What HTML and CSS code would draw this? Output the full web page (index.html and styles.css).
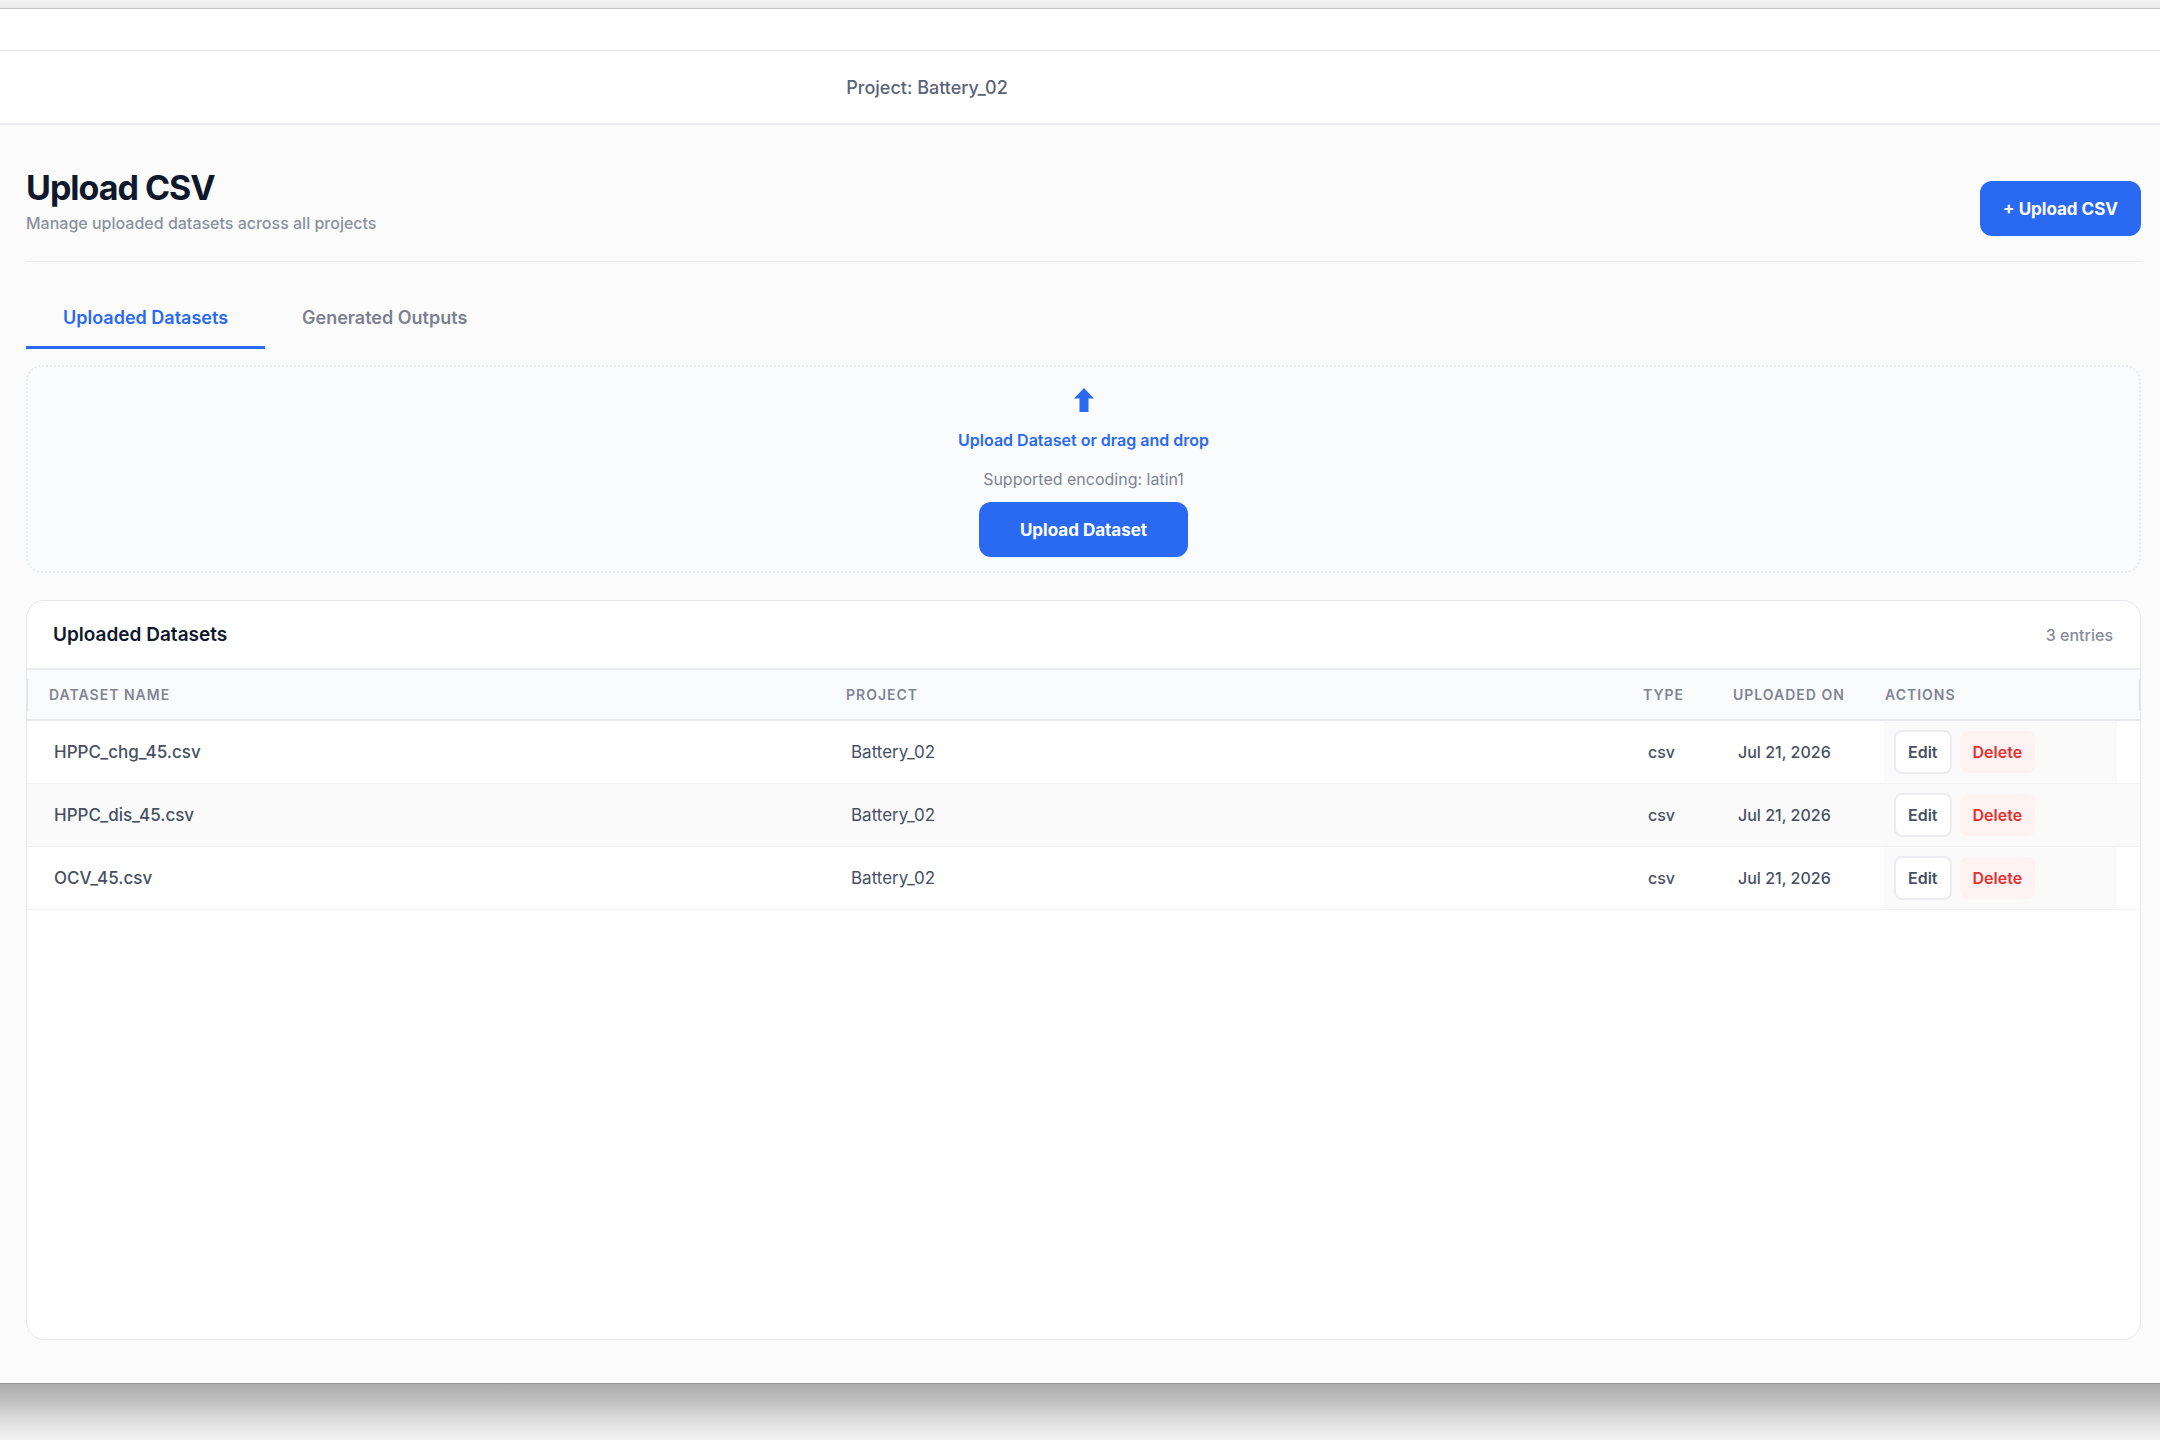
FILE: index.html
```html
<!DOCTYPE html>
<html lang="en">
<head>
<meta charset="utf-8">
<meta name="viewport" content="width=device-width, initial-scale=1">
<title>Upload CSV</title>
<link rel="stylesheet" href="styles.css">
</head>
<body>
<div class="window">
  <div class="titlebar"></div>
  <header class="project-bar">Project: Battery_02</header>
  <main class="page">
    <div class="page-head">
      <div>
        <h1 class="page-title">Upload CSV</h1>
        <p class="page-subtitle">Manage uploaded datasets across all projects</p>
      </div>
      <button class="btn-primary" type="button">+ Upload CSV</button>
    </div>
    <nav class="tabs">
      <a class="tab tab-active" href="#uploaded">Uploaded Datasets</a>
      <a class="tab" href="#outputs">Generated Outputs</a>
    </nav>
    <section class="dropzone">
      <svg class="drop-icon" viewBox="0 0 20 24" aria-hidden="true"><path d="M10 0L20 10.500H14.500V24H5.500V10.500H0Z"/></svg>
      <p class="drop-title">Upload Dataset or drag and drop</p>
      <p class="drop-note">Supported encoding: latin1</p>
      <button class="btn-primary btn-wide" type="button">Upload Dataset</button>
    </section>
    <section class="card" id="uploaded">
      <div class="card-head">
        <h2 class="card-title">Uploaded Datasets</h2>
        <span class="card-count">3 entries</span>
      </div>
      <table class="datasets">
        <colgroup><col><col><col class="col-type"><col class="col-date"><col class="col-actions"></colgroup>
        <thead>
          <tr><th>Dataset name</th><th>Project</th><th>Type</th><th><div class="clip">Uploaded on</div></th><th>Actions</th></tr>
        </thead>
        <tbody>
          <tr>
            <td class="name">HPPC_chg_45.csv</td><td>Battery_02</td><td class="meta">csv</td><td class="meta">Jul 21, 2026</td>
            <td class="actions-cell"><div class="actions"><button class="btn-edit" type="button">Edit</button><button class="btn-delete" type="button">Delete</button></div></td>
          </tr>
          <tr>
            <td class="name">HPPC_dis_45.csv</td><td>Battery_02</td><td class="meta">csv</td><td class="meta">Jul 21, 2026</td>
            <td class="actions-cell"><div class="actions"><button class="btn-edit" type="button">Edit</button><button class="btn-delete" type="button">Delete</button></div></td>
          </tr>
          <tr>
            <td class="name">OCV_45.csv</td><td>Battery_02</td><td class="meta">csv</td><td class="meta">Jul 21, 2026</td>
            <td class="actions-cell"><div class="actions"><button class="btn-edit" type="button">Edit</button><button class="btn-delete" type="button">Delete</button></div></td>
          </tr>
        </tbody>
      </table>
    </section>
  </main>
</div>
<div class="window-shadow"></div>
</body>
</html>
```
FILE: styles.css
```css
* { box-sizing: border-box; }

body {
  margin: 0;
  min-height: 100vh;
  padding-top: 8px;
  display: flex;
  flex-direction: column;
  background: linear-gradient(#f4f4f4, #e9e9e9 8px);
  font-family: Inter, "Liberation Sans", sans-serif;
  font-size: 16px;
  line-height: 24px;
  color: #475063;
}

h1, h2, p { margin: 0; }
button { font: inherit; cursor: pointer; }

.window {
  flex: 1;
  display: flex;
  flex-direction: column;
  background: #fbfbfb;
  border-top: 1px solid #c4c4c4;
  border-bottom: 1px solid #959595;
}

.titlebar {
  height: 42px;
  background: #fff;
  border-bottom: 1px solid #e6e7e9;
}

.project-bar {
  height: 74px;
  padding: 2px 306px 0 0;
  display: flex;
  align-items: center;
  justify-content: center;
  background: #fff;
  border-bottom: 2px solid #e8e9ec;
  font-size: 18px;
  font-weight: 500;
  color: #5b6477;
}

.page {
  flex: 1;
  display: flex;
  flex-direction: column;
  padding: 41px 19px 43px 26px;
}

.page-head {
  display: flex;
  align-items: flex-end;
  justify-content: space-between;
  padding-bottom: 25px;
  border-bottom: 1px solid #ececee;
}

.page-title {
  font-size: 34px;
  line-height: 44px;
  font-weight: 700;
  letter-spacing: -1px;
  color: #10182d;
}

.page-subtitle { line-height: 26px; font-weight: 500; color: #8b919d; }

.btn-primary {
  height: 55px;
  padding: 0 23px;
  border: 0;
  border-radius: 12px;
  background: #2a69f2;
  color: #fff;
  font-size: 17px;
  font-weight: 700;
}

.btn-wide { padding: 0 41px; }

.tabs { display: flex; margin-top: 23px; }

.tab {
  height: 64px;
  padding: 4px 37px 0;
  display: flex;
  align-items: center;
  border-bottom: 3px solid transparent;
  font-size: 18px;
  font-weight: 600;
  color: #7b8190;
  text-decoration: none;
}

.tab-active { border-color: #2a69f2; color: #2a69f2; }

.dropzone {
  margin-top: 16px;
  padding: 21px 0 14px;
  display: flex;
  flex-direction: column;
  align-items: center;
  border: 2px dotted #ebedf0;
  border-radius: 16px;
  background: #fafbfd;
}

.drop-icon { width: 20px; height: 24px; fill: #2a69f2; }
.drop-title { margin-top: 16px; font-weight: 600; color: #2a69f2; }
.drop-note { margin: 15px 0 11px; color: #7e8491; }

.card {
  flex: 1;
  margin-top: 27px;
  border: 1px solid #e6e7ea;
  border-radius: 18px;
  background: #fff;
}

.card-head {
  height: 67px;
  padding: 1px 27px 0 26px;
  display: flex;
  align-items: center;
  justify-content: space-between;
}

.card-title { font-size: 19px; font-weight: 600; color: #10182d; }
.card-count { font-weight: 500; color: #858b98; }

.datasets {
  width: 100%;
  table-layout: fixed;
  border-collapse: separate;
  border-spacing: 0;
}

.col-type { width: 90px; }
.col-date { width: 152px; }
.col-actions { width: 277px; }

.datasets th {
  height: 53px;
  padding: 0 20px 0 22px;
  border-top: 2px solid #ebecf0;
  border-bottom: 2px solid #e7e9ed;
  background: #fafbfd;
  text-align: left;
  text-transform: uppercase;
  white-space: nowrap;
  font-size: 14px;
  font-weight: 600;
  letter-spacing: 1px;
  color: #7f8593;
}

.datasets th:first-child {
  background: linear-gradient(#dfe1e6, #dfe1e6) left / 1px 32px no-repeat #fafbfd;
}

.datasets th:last-child {
  background: linear-gradient(#dfe1e6, #dfe1e6) right / 1px 32px no-repeat #fafbfd;
}

.clip { overflow: hidden; }

.datasets td {
  height: 63px;
  padding: 0 20px 0 27px;
  border-bottom: 1px solid #f2f2f3;
  white-space: nowrap;
  font-size: 17px;
}

.datasets .name { font-weight: 500; }
.datasets .meta { font-size: 16px; font-weight: 500; }
.datasets tbody tr:nth-child(even) { background: #fafafa; }
.datasets .actions-cell { padding: 0 23px 0 21px; }

.actions {
  height: 62px;
  padding: 0 10px;
  display: flex;
  align-items: center;
  gap: 8px;
  background: #fafafa;
}

.btn-edit, .btn-delete {
  height: 44px;
  padding: 0 12px;
  border: 2px solid #ebecef;
  border-radius: 8px;
  background: #fff;
  font-size: 16px;
  font-weight: 600;
  color: #475063;
}

.btn-delete {
  height: 42px;
  padding: 0 13px;
  border-width: 0;
  background: #fef2f2;
  color: #e5302f;
}

.window-shadow {
  height: 56px;
  background: linear-gradient(#ababab, #bcbcbc 25%, #dadada 60%, #f4f4f4);
}
```
